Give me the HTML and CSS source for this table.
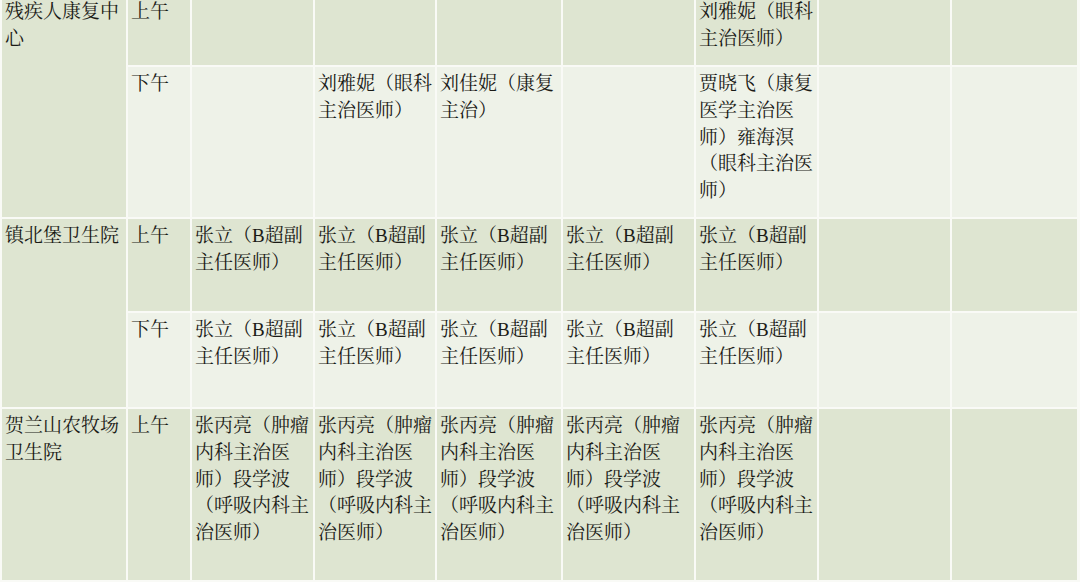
FILE: index.html
```html
<!DOCTYPE html>
<html lang="zh-CN">
<head>
<meta charset="utf-8">
<title>排班表</title>
<link rel="stylesheet" href="styles.css">
</head>
<body>
<div class="frame">
<table class="schedule">
  <colgroup>
    <col class="c1"><col class="c2"><col class="c3"><col class="c4"><col class="c5"><col class="c6"><col class="c7"><col class="c8"><col class="c9">
  </colgroup>
  <tbody>
    <tr class="dark r1">
      <td rowspan="2">残疾人康复中心</td>
      <td>上午</td>
      <td></td><td></td><td></td><td></td>
      <td>刘雅妮（眼科主治医师）</td>
      <td></td><td></td>
    </tr>
    <tr class="light r2">
      <td>下午</td>
      <td></td>
      <td>刘雅妮（眼科主治医师）</td>
      <td>刘佳妮（康复主治）</td>
      <td></td>
      <td>贾晓飞（康复医学主治医师）雍海溟（眼科主治医师）</td>
      <td></td><td></td>
    </tr>
    <tr class="dark r3">
      <td rowspan="2">镇北堡卫生院</td>
      <td>上午</td>
      <td>张立（B超副主任医师）</td>
      <td>张立（B超副主任医师）</td>
      <td>张立（B超副主任医师）</td>
      <td>张立（B超副主任医师）</td>
      <td>张立（B超副主任医师）</td>
      <td></td><td></td>
    </tr>
    <tr class="light r4">
      <td>下午</td>
      <td>张立（B超副主任医师）</td>
      <td>张立（B超副主任医师）</td>
      <td>张立（B超副主任医师）</td>
      <td>张立（B超副主任医师）</td>
      <td>张立（B超副主任医师）</td>
      <td></td><td></td>
    </tr>
    <tr class="dark r5">
      <td>贺兰山农牧场卫生院</td>
      <td>上午</td>
      <td>张丙亮（肿瘤内科主治医师）段学波（呼吸内科主治医师）</td>
      <td>张丙亮（肿瘤内科主治医师）段学波（呼吸内科主治医师）</td>
      <td>张丙亮（肿瘤内科主治医师）段学波（呼吸内科主治医师）</td>
      <td>张丙亮（肿瘤内科主治医师）段学波（呼吸内科主治医师）</td>
      <td>张丙亮（肿瘤内科主治医师）段学波（呼吸内科主治医师）</td>
      <td></td><td></td>
    </tr>
  </tbody>
</table>
</div>
</body>
</html>
```

FILE: styles.css
```css
html, body {
  margin: 0;
  padding: 0;
  background: #f9faf6;
}
.frame {
  width: 1080px;
  height: 582px;
  overflow: hidden;
}
.schedule {
  margin-top: -7px;
  width: 1079px;
  table-layout: fixed;
  border-collapse: separate;
  border-spacing: 2px;
  background: #f9faf6;
  font-family: "Liberation Serif", "Noto Serif CJK SC", "Noto Sans CJK SC", serif;
  font-size: 19px;
  line-height: 26.75px;
  color: #1a1a16;
  text-spacing-trim: space-all;
}
.c1 { width: 124px; }
.c2 { width: 62px; }
.c3 { width: 121px; }
.c4 { width: 120px; }
.c5 { width: 124px; }
.c6 { width: 131px; }
.c7 { width: 121px; }
.c8 { width: 131px; }
.c9 { width: 125px; }
.schedule td {
  vertical-align: top;
  padding: 4px 2px 0 3px;
  word-break: break-all;
}
.dark td { background: #dee5d1; }
.light td { background: #eef2e8; }
.r1 td { height: 66px; }
.r2 td { height: 146px; }
.r3 td { height: 88px; }
.r4 td { height: 90px; }
.r5 td { height: 167px; }
```
